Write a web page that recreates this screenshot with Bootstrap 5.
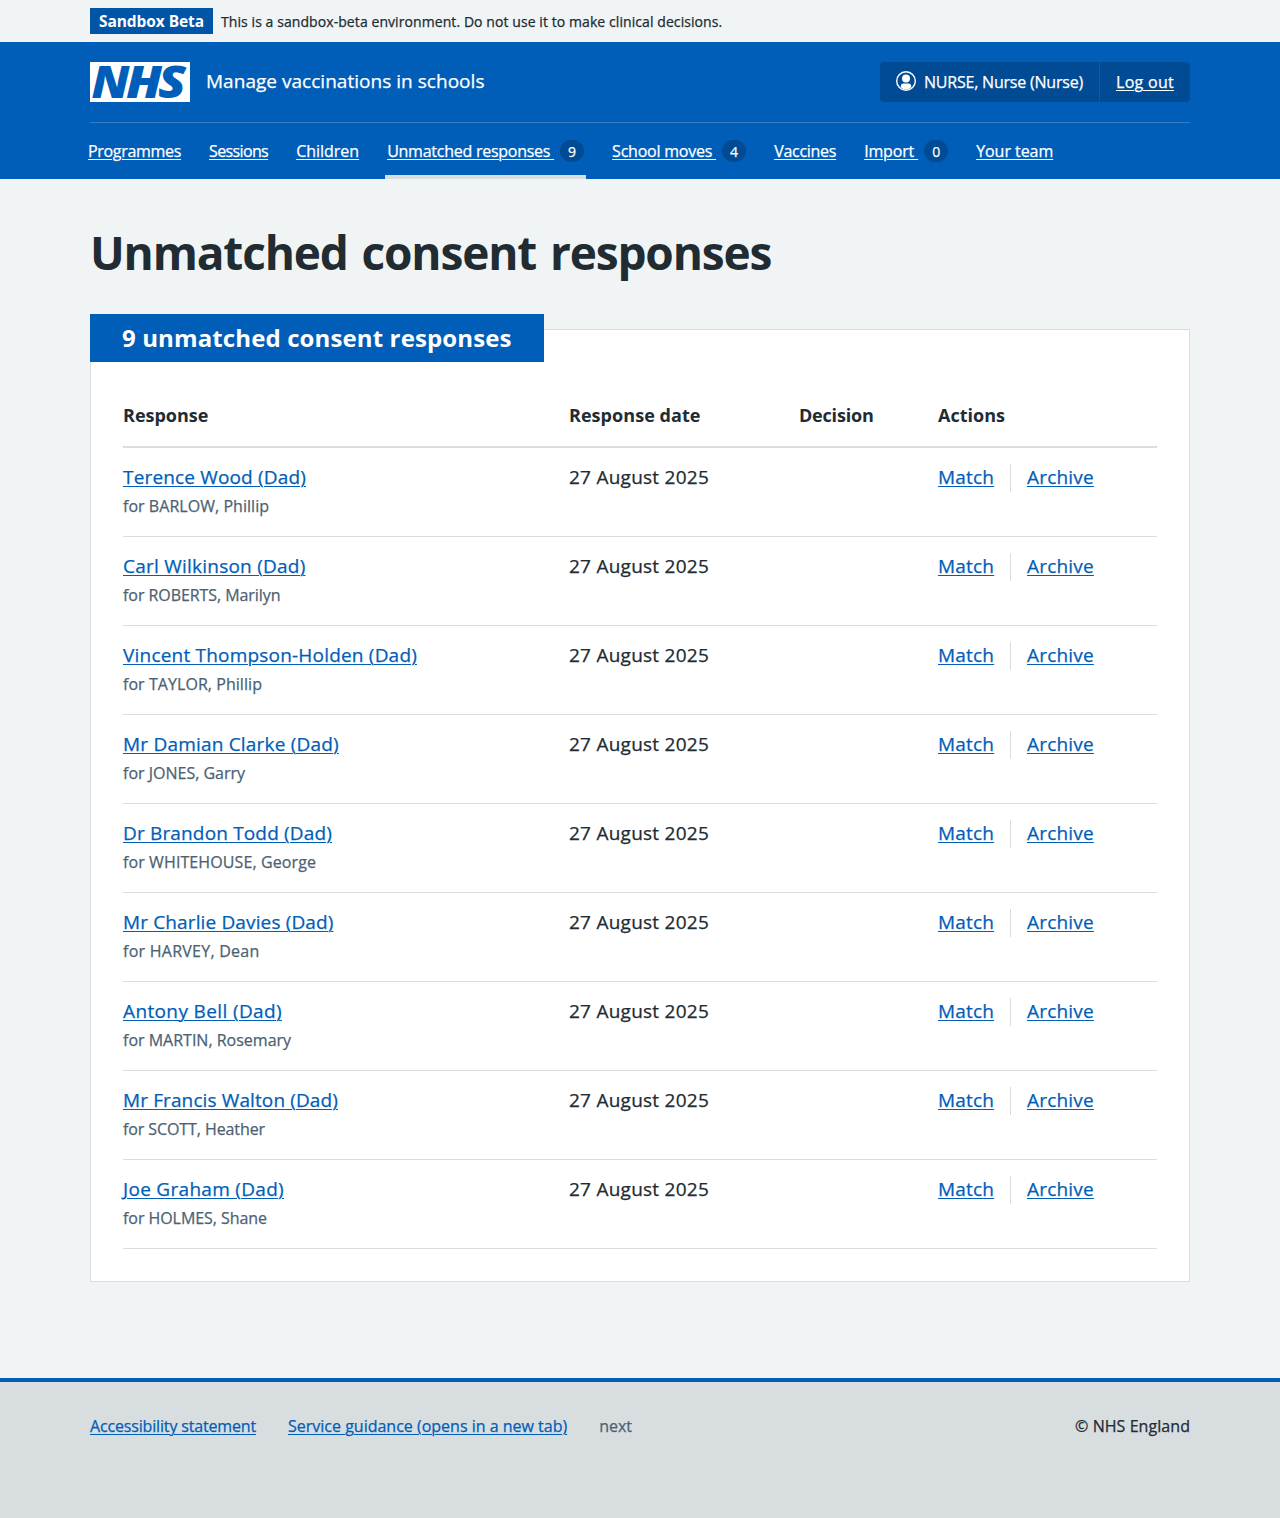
<!DOCTYPE html>
<html lang="en">
<head>
<meta charset="utf-8">
<meta name="viewport" content="width=device-width, initial-scale=1">
<title>Unmatched consent responses</title>
<link href="https://cdn.jsdelivr.net/npm/bootstrap@5.3.0/dist/css/bootstrap.min.css" rel="stylesheet">
<style>
  body { background: #f0f4f5; color: #212b32; font-family: "Open Sans", "Noto Sans", sans-serif; font-size: 19px; line-height: 28px; -webkit-text-stroke: .25px; }
  a { color: #005eb8; text-underline-offset: 2px; text-decoration-thickness: 1px; }
  .page-width { width: 1100px; margin: 0 auto; }

  .env-banner { height: 42px; font-size: 14px; line-height: 20px; }
  .env-tag { background: #0055a6; color: #fff; font-size: 15.5px; font-weight: 700; line-height: 26px; width: 123px; letter-spacing: -.08px; -webkit-text-stroke: 0; }
  .env-text { letter-spacing: .078px; padding-top: 4px; }

  .site-header { background: #005eb8; height: 137px; }
  .site-header a { color: #fff; }
  .brand-row { height: 81px; padding: 20px 0; border-bottom: 1px solid #337ec6; }
  .nhs-logo { overflow: visible; }
  .service-name { color: #fff; padding-bottom: 2px; letter-spacing: .03px; }
  .account { background: #004b93; height: 40px; color: #fff; font-size: 16px; line-height: 24px; border-radius: 4px; width: 310px; }
  .account-user { width: 220px; padding-left: 16px; border-right: 1px solid #005eb8; letter-spacing: -.208px; }
  .account-user svg { margin-bottom: 2px; }
  .account-out { padding-left: 16px; letter-spacing: .29px; }

  .main-nav { margin-left: -4px; gap: 24px; height: 56px; font-size: 16px; line-height: 24px; }
  .main-nav li { padding: 16px 2px 0; height: 56px; display: flex; }
  .main-nav li.current { border-bottom: 4px solid #d8dde0; }
  .main-nav a { white-space: pre; }
  .main-nav li:nth-child(1) a { letter-spacing: -.31px; }
  .main-nav li:nth-child(2) a { letter-spacing: -.63px; }
  .main-nav li:nth-child(3) a { letter-spacing: -.01px; }
  .main-nav li:nth-child(4) a { letter-spacing: -.255px; }
  .main-nav li:nth-child(5) a { letter-spacing: -.222px; }
  .main-nav li:nth-child(6) a { letter-spacing: -.277px; }
  .main-nav li:nth-child(7) a { letter-spacing: -.156px; }
  .main-nav li:nth-child(8) a { letter-spacing: -.052px; }
  .count { background: #004b93; color: #fff; width: 24px; height: 22px; margin: 1px 0 0 6px; border-radius: 12px; font-size: 14px; line-height: 24px; text-align: center; }

  .page-title { font-size: 46px; font-weight: 700; line-height: 56px; letter-spacing: -1.15px; word-spacing: 3px; margin: 0; padding-top: 45px; -webkit-text-stroke: 0; }
  .panel { background: #fff; border: 1px solid #d8dde0; margin-top: 49px; height: 953px; padding: 0 32px; }
  .panel-title { background: #005eb8; color: #fff; font-size: 24px; font-weight: 700; line-height: 48px; width: 454px; height: 48px; margin: -16px 0 0 -33px; padding-left: 32px; letter-spacing: .12px; -webkit-text-stroke: 0; }

  .responses { width: 1034px; table-layout: fixed; margin-top: 24px; border-collapse: separate; border-spacing: 0; }
  .responses th { font-size: 18px; font-weight: 700; height: 62px; padding: 0 0 3px; border-bottom: 2px solid #d8dde0; letter-spacing: 0; -webkit-text-stroke: 0; }
  .responses th:nth-child(2) { letter-spacing: .05px; }
  .responses th:nth-child(3) { letter-spacing: -.2px; }
  .responses td { height: 89px; padding: 15px 0 0; vertical-align: top; border-bottom: 1px solid #d8dde0; letter-spacing: .2px; }
  .responses td:nth-child(2) { letter-spacing: .248px; }
  .child-name { color: #4c6272; font-size: 16px; line-height: 24px; margin-top: 3px; letter-spacing: 0; }
  .responses tr:nth-child(1) .parent { letter-spacing: .162px; }
  .responses tr:nth-child(2) .parent { letter-spacing: .233px; }
  .responses tr:nth-child(5) .parent { letter-spacing: .16px; }
  .responses tr:nth-child(6) .parent { letter-spacing: .135px; }
  .responses tr:nth-child(7) .parent { letter-spacing: .375px; }
  .responses tr:nth-child(8) .parent { letter-spacing: .116px; }
  .responses tr:nth-child(9) .parent { letter-spacing: .301px; }
  .responses tr:nth-child(1) .child-name { letter-spacing: .04px; }
  .responses tr:nth-child(2) .child-name { letter-spacing: -.062px; }
  .responses tr:nth-child(3) .child-name { letter-spacing: .056px; }
  .responses tr:nth-child(5) .child-name { letter-spacing: .102px; }
  .responses tr:nth-child(6) .child-name { letter-spacing: .252px; }
  .responses tr:nth-child(8) .child-name { letter-spacing: -.091px; }
  .responses tr:nth-child(9) .child-name { letter-spacing: -.054px; }
  .row-actions { padding-top: 1px; }
  .row-actions a { line-height: 26px; height: 28px; }
  .row-actions a:first-child { width: 73px; border-right: 1px solid #d8dde0; margin-right: 16px; }

  .site-footer { background: #d8dde0; border-top: 4px solid #005eb8; margin-top: 96px; height: 140px; padding-top: 32px; font-size: 16px; line-height: 24px; }
  .site-footer .links { gap: 32px; }
  .site-footer .links a:first-child { letter-spacing: -.162px; }
  .copyright { letter-spacing: .06px; }
  .release { color: #4c6272; }
</style>
<script src="https://cdn.jsdelivr.net/npm/bootstrap@5.3.0/dist/js/bootstrap.bundle.min.js"></script>
</head>
<body>
<div class="env-banner">
  <div class="page-width d-flex pt-2 gap-2">
    <strong class="env-tag text-center">Sandbox Beta</strong>
    <span class="env-text">This is a sandbox-beta environment. Do not use it to make clinical decisions.</span>
  </div>
</div>

<header class="site-header">
  <div class="page-width">
    <div class="brand-row d-flex justify-content-between">
      <div class="d-flex align-items-center gap-3">
        <svg class="nhs-logo" width="100" height="40" viewBox="0 0 100 40" role="img" aria-label="NHS">
          <rect width="100" height="40" fill="#fff"/>
          <g fill="#005eb8" font-family="Open Sans, sans-serif" font-weight="800" font-style="italic" font-size="45">
            <text x="1.6" y="36" textLength="38" lengthAdjust="spacingAndGlyphs">N</text>
            <text x="36" y="36" textLength="36" lengthAdjust="spacingAndGlyphs">H</text>
            <text x="68" y="36" textLength="28" lengthAdjust="spacingAndGlyphs">S</text>
          </g>
        </svg>
        <span class="service-name">Manage vaccinations in schools</span>
      </div>
      <div class="account d-flex">
        <div class="account-user d-flex align-items-center gap-2">
          <svg width="20" height="20" viewBox="0 0 20 20" aria-hidden="true">
            <circle cx="10" cy="10" r="9.3" fill="none" stroke="#fff" stroke-width="1.4"/>
            <circle cx="10" cy="7.6" r="4" fill="#fff"/>
            <path d="M4.8 16.2v-1.4a2.6 2.6 0 0 1 2.6-2.4h5.2a2.6 2.6 0 0 1 2.6 2.4v1.4A8 8 0 0 1 10 18.6a8 8 0 0 1-5.2-2.4z" fill="#fff"/>
          </svg>
          <span>NURSE, Nurse (Nurse)</span>
        </div>
        <div class="account-out d-flex align-items-center"><a href="#">Log out</a></div>
      </div>
    </div>
    <nav>
      <ul class="main-nav list-unstyled d-flex mb-0">
        <li><a href="#">Programmes</a></li>
        <li><a href="#">Sessions</a></li>
        <li><a href="#">Children</a></li>
        <li class="current"><a href="#">Unmatched responses </a><span class="count">9</span></li>
        <li><a href="#">School moves </a><span class="count">4</span></li>
        <li><a href="#">Vaccines</a></li>
        <li><a href="#">Import </a><span class="count">0</span></li>
        <li><a href="#">Your team</a></li>
      </ul>
    </nav>
  </div>
</header>

<main class="page-width">
  <h1 class="page-title">Unmatched consent responses</h1>
  <section class="panel">
    <h2 class="panel-title">9 unmatched consent responses</h2>
    <table class="responses">
      <colgroup><col style="width:446px"><col style="width:230px"><col style="width:139px"><col style="width:219px"></colgroup>
      <thead><tr><th>Response</th><th>Response date</th><th>Decision</th><th>Actions</th></tr></thead>
      <tbody>
        <tr><td><a class="parent" href="#">Terence Wood (Dad)</a><div class="child-name">for BARLOW, Phillip</div></td><td>27 August 2025</td><td></td><td><div class="row-actions d-flex"><a href="#">Match</a><a href="#">Archive</a></div></td></tr>
        <tr><td><a class="parent" href="#">Carl Wilkinson (Dad)</a><div class="child-name">for ROBERTS, Marilyn</div></td><td>27 August 2025</td><td></td><td><div class="row-actions d-flex"><a href="#">Match</a><a href="#">Archive</a></div></td></tr>
        <tr><td><a class="parent" href="#">Vincent Thompson-Holden (Dad)</a><div class="child-name">for TAYLOR, Phillip</div></td><td>27 August 2025</td><td></td><td><div class="row-actions d-flex"><a href="#">Match</a><a href="#">Archive</a></div></td></tr>
        <tr><td><a class="parent" href="#">Mr Damian Clarke (Dad)</a><div class="child-name">for JONES, Garry</div></td><td>27 August 2025</td><td></td><td><div class="row-actions d-flex"><a href="#">Match</a><a href="#">Archive</a></div></td></tr>
        <tr><td><a class="parent" href="#">Dr Brandon Todd (Dad)</a><div class="child-name">for WHITEHOUSE, George</div></td><td>27 August 2025</td><td></td><td><div class="row-actions d-flex"><a href="#">Match</a><a href="#">Archive</a></div></td></tr>
        <tr><td><a class="parent" href="#">Mr Charlie Davies (Dad)</a><div class="child-name">for HARVEY, Dean</div></td><td>27 August 2025</td><td></td><td><div class="row-actions d-flex"><a href="#">Match</a><a href="#">Archive</a></div></td></tr>
        <tr><td><a class="parent" href="#">Antony Bell (Dad)</a><div class="child-name">for MARTIN, Rosemary</div></td><td>27 August 2025</td><td></td><td><div class="row-actions d-flex"><a href="#">Match</a><a href="#">Archive</a></div></td></tr>
        <tr><td><a class="parent" href="#">Mr Francis Walton (Dad)</a><div class="child-name">for SCOTT, Heather</div></td><td>27 August 2025</td><td></td><td><div class="row-actions d-flex"><a href="#">Match</a><a href="#">Archive</a></div></td></tr>
        <tr><td><a class="parent" href="#">Joe Graham (Dad)</a><div class="child-name">for HOLMES, Shane</div></td><td>27 August 2025</td><td></td><td><div class="row-actions d-flex"><a href="#">Match</a><a href="#">Archive</a></div></td></tr>
      </tbody>
    </table>
  </section>
</main>

<footer class="site-footer">
  <div class="page-width d-flex justify-content-between">
    <div class="links d-flex">
      <a href="#">Accessibility statement</a>
      <a href="#">Service guidance (opens in a new tab)</a>
      <span class="release">next</span>
    </div>
    <span class="copyright">© NHS England</span>
  </div>
</footer>
</body>
</html>
